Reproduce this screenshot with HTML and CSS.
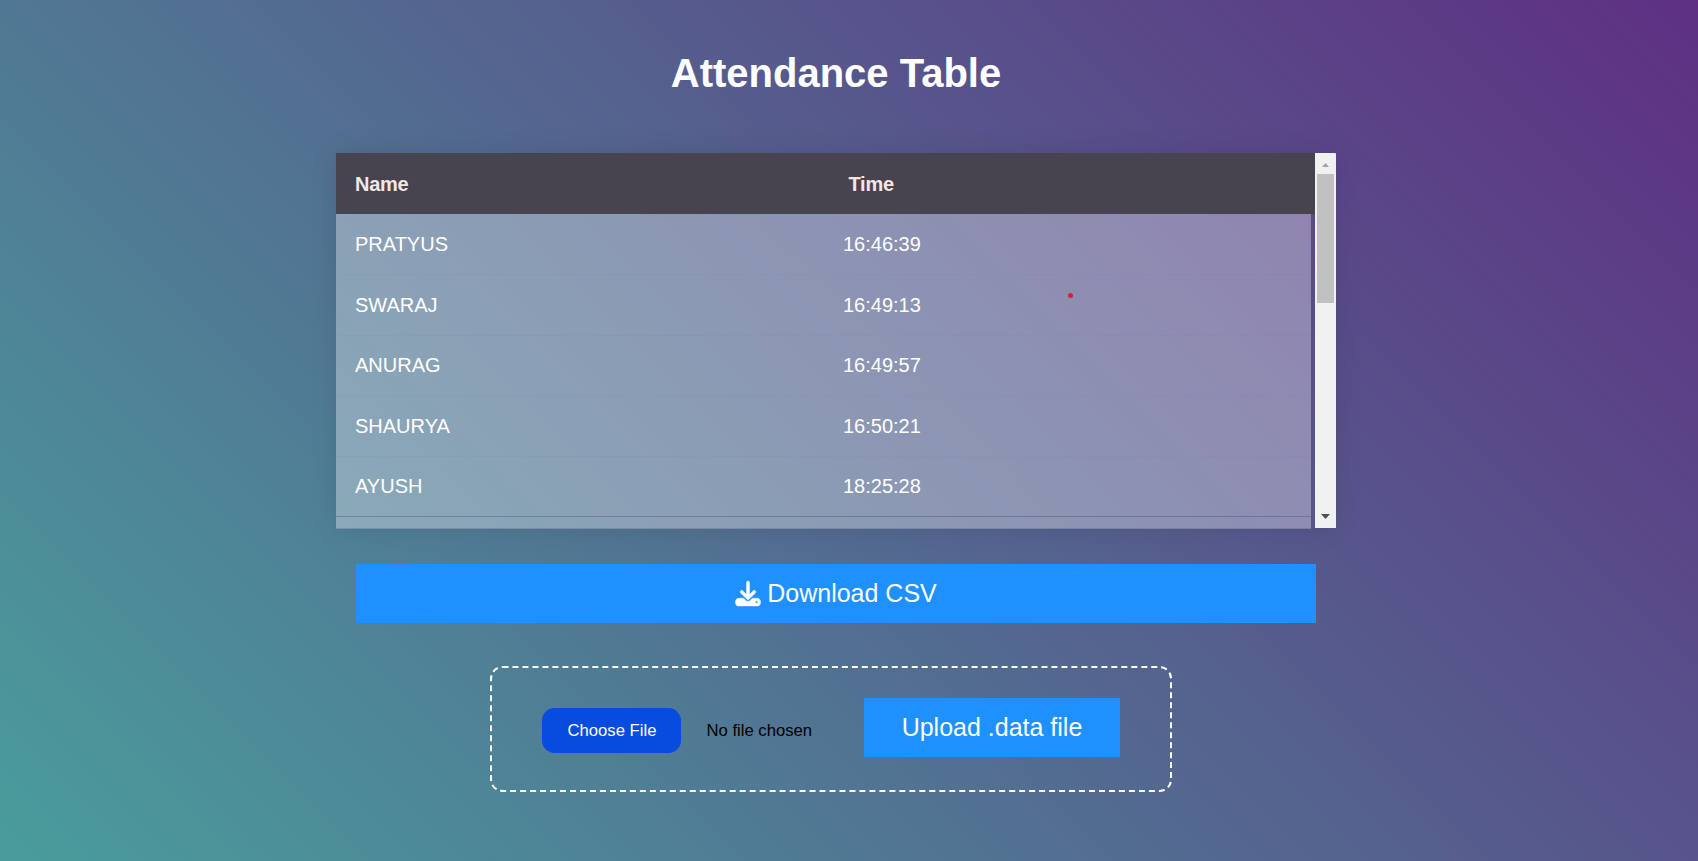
FILE: index.html
```html
<!DOCTYPE html>
<html lang="en">
<head>
<meta charset="utf-8">
<title>Attendance Table</title>
<link rel="stylesheet" href="styles.css">
</head>
<body>
<main class="page">
  <h1 class="title">Attendance Table</h1>
  <section class="panel">
    <div class="table">
      <div class="row head"><span>Name</span><span class="time">Time</span></div>
      <div class="rows">
        <div class="row"><span>PRATYUS</span><span>16:46:39</span></div>
        <div class="row"><span>SWARAJ</span><span>16:49:13</span></div>
        <div class="row"><span>ANURAG</span><span>16:49:57</span></div>
        <div class="row"><span>SHAURYA</span><span>16:50:21</span></div>
        <div class="row last"><span>AYUSH</span><span>18:25:28</span></div>
      </div>
    </div>
    <div class="scrollbar">
      <svg class="arrow" viewBox="0 0 21 21"><path d="M7 14h7l-3.500-4z" fill="#a3a3a3"/></svg>
      <div class="thumb"></div>
      <svg class="arrow down" viewBox="0 0 21 21"><path d="M6 7h9l-4.500 5z" fill="#505050"/></svg>
    </div>
    <i class="marker"></i>
  </section>
  <button class="button download">
    <svg class="icon" viewBox="0 0 512 512"><path fill="currentColor" stroke="currentColor" stroke-width="8" d="M288 32c0-17.700-14.300-32-32-32s-32 14.300-32 32V274.700l-73.400-73.400c-12.500-12.500-32.800-12.500-45.300 0s-12.500 32.800 0 45.300l128 128c12.500 12.500 32.800 12.500 45.300 0l128-128c12.500-12.500 12.500-32.800 0-45.300s-32.800-12.500-45.300 0L288 274.700V32zM64 352c-35.300 0-64 28.700-64 64v32c0 35.300 28.700 64 64 64H448c35.300 0 64-28.700 64-64V416c0-35.300-28.700-64-64-64H346.500l-45.300 45.300c-25 25-65.500 25-90.500 0L165.500 352H64zm368 56a24 24 0 1 1 0 48 24 24 0 1 1 0-48z"/></svg>
    <span>Download CSV</span>
  </button>
  <form class="upload">
    <button type="button" class="choose">Choose File</button>
    <span class="filename">No file chosen</span>
    <button type="button" class="button submit">Upload .data file</button>
  </form>
</main>
</body>
</html>
```
FILE: styles.css
```css
* { box-sizing: border-box; }
body {
  margin: 0;
  height: 861px;
  overflow: hidden;
  background: linear-gradient(45deg, #49a09d -3%, #5f2c82 103%);
  font-family: "Liberation Sans", Arial, sans-serif;
  color: #fff;
}
.page {
  width: 1000px;
  margin-left: 336px;
  padding-top: 50px;
  display: flex;
  flex-direction: column;
  align-items: center;
}
.title {
  margin: 0 0 57px;
  font-size: 40px;
  line-height: 46px;
  white-space: nowrap;
}
.panel {
  position: relative;
  display: flex;
  width: 1000px;
  height: 375px;
  box-shadow: 0 0 25px rgba(0, 0, 0, 0.1);
}
.table { width: 979px; }
.row {
  display: grid;
  grid-template-columns: 488px 1fr;
  align-items: center;
  height: 60.5px;
  padding: 0.6px 0 0 19px;
  border-bottom: 1px solid rgba(70, 75, 115, 0.04);
  font-size: 20px;
}
.head {
  height: 61px;
  padding-top: 1.6px;
  border: 0;
  background: #48444f;
  color: #f3e6e6;
  font-weight: bold;
  letter-spacing: -0.25px;
}
.time { padding-left: 5.5px; }
.rows {
  width: 975px;
  height: 315px;
  padding-top: 0.5px;
  background: rgba(255, 255, 255, 0.33);
  border-bottom: 1px solid rgba(70, 90, 130, 0.25);
}
.last { border-bottom: 1px solid rgba(70, 75, 115, 0.4); height: 60.5px; }
.scrollbar {
  width: 21px;
  display: flex;
  flex-direction: column;
  align-items: center;
  background: #f1f1f1;
  border-top-right-radius: 1px;
}
.arrow { width: 21px; height: 21px; flex: none; }
.thumb { width: 17px; height: 129px; background: #c1c1c1; }
.down { margin-top: auto; }
.marker {
  position: absolute;
  left: 732px;
  top: 140px;
  width: 5px;
  height: 5px;
  border-radius: 50%;
  background: #dc1f2e;
}
button { border: 0; padding: 0; font-family: inherit; color: #fff; }
.button {
  display: flex;
  justify-content: center;
  align-items: center;
  height: 59px;
  background: #1e90ff;
  font-size: 25px;
}
.download { width: 960px; margin-top: 36px; gap: 6px; }
.icon { width: 26px; height: 25px; margin-bottom: 1px; overflow: visible; }
.upload {
  display: flex;
  align-items: center;
  width: 682px;
  height: 126px;
  margin: 43px 10px 0 0;
  padding-left: 50px;
  border: 2px dashed #fff;
  border-radius: 12.5px;
}
.choose {
  width: 139px;
  height: 45px;
  margin-top: 3px;
  padding-left: 1px;
  border-radius: 12.5px;
  background: #084cdf;
  font-size: 16.67px;
}
.filename { width: 158px; margin: 3px 0 0 25px; padding-left: 0.5px; color: #000; font-size: 16.67px; }
.submit { width: 256px; margin-top: -3px; }
```
